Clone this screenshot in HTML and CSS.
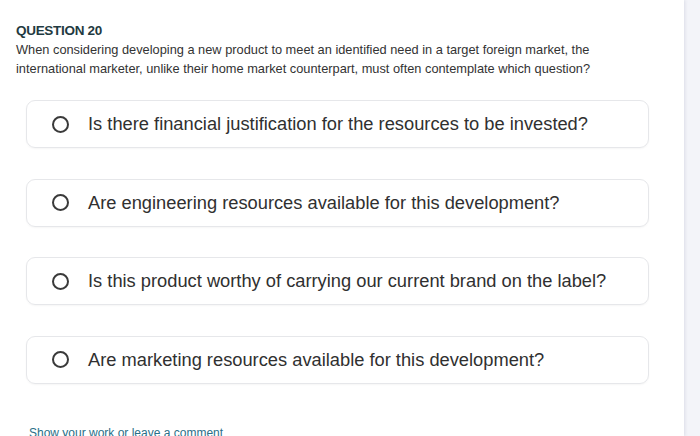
FILE: index.html
```html
<!DOCTYPE html>
<html>
<head>
<meta charset="utf-8">
<link rel="stylesheet" href="styles.css">
</head>
<body>
<div class="page">
  <main class="panel">
    <h2 class="qnum">QUESTION 20</h2>
    <p class="prompt">When considering developing a new product to meet an identified need in a target foreign market, the international marketer, unlike their home market counterpart, must often contemplate which question?</p>
    <div class="options">
      <label class="option"><span class="radio"></span><span class="otext">Is there financial justification for the resources to be invested?</span></label>
      <label class="option"><span class="radio"></span><span class="otext">Are engineering resources available for this development?</span></label>
      <label class="option"><span class="radio"></span><span class="otext">Is this product worthy of carrying our current brand on the label?</span></label>
      <label class="option"><span class="radio"></span><span class="otext">Are marketing resources available for this development?</span></label>
    </div>
    <a class="comment" href="#">Show your work or leave a comment</a>
  </main>
  <aside class="side"></aside>
</div>
</body>
</html>
```

FILE: styles.css
```css
html, body {
  margin: 0;
  padding: 0;
  height: 100%;
  overflow: hidden;
}
body {
  background: #f3f4f9;
  font-family: "Liberation Sans", Arial, sans-serif;
}
.page {
  display: flex;
  height: 100%;
}
.panel {
  width: 684px;
  flex: none;
  background: #ffffff;
  box-shadow: 1px 0 3px rgba(150, 155, 180, 0.25);
  padding: 23px 0 0 16px;
  box-sizing: border-box;
}
.side {
  flex: 1;
}
.qnum {
  margin: 0;
  font-size: 13.5px;
  line-height: 15px;
  font-weight: bold;
  color: #1f3a41;
  letter-spacing: -0.3px;
}
.prompt {
  margin: 2px 0 0 0;
  font-size: 12.8px;
  line-height: 19px;
  color: #333333;
  width: 600px;
}
.options {
  display: flex;
  flex-direction: column;
  gap: 30.6px;
  margin: 22px 0 0 10px;
  width: 623px;
}
.option {
  display: flex;
  align-items: center;
  height: 48px;
  box-sizing: border-box;
  border: 1px solid #e6e7ea;
  border-radius: 9px;
  box-shadow: 0 1px 2px rgba(0, 0, 0, 0.04);
  padding-left: 25px;
}
.radio {
  width: 17px;
  height: 17px;
  box-sizing: border-box;
  border: 2px solid #3a3a3a;
  border-radius: 50%;
  flex: none;
}
.otext {
  margin-left: 19px;
  font-size: 18.3px;
  color: #303030;
}
.comment {
  display: block;
  margin: 42px 0 0 13px;
  font-size: 12px;
  color: #2a6f88;
  text-decoration: none;
}
```
